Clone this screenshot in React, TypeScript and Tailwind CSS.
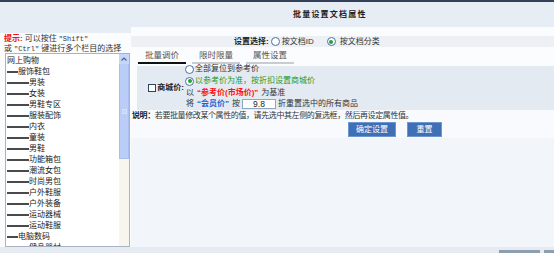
import React from "react";

const tree: [number, string][] = [
  [0, "网上购物"],
  [1, "服饰鞋包"],
  [2, "男装"],
  [2, "女装"],
  [2, "男鞋专区"],
  [2, "服装配饰"],
  [2, "内衣"],
  [2, "童装"],
  [2, "男鞋"],
  [2, "功能箱包"],
  [2, "潮流女包"],
  [2, "时尚男包"],
  [2, "户外鞋服"],
  [2, "户外装备"],
  [2, "运动器械"],
  [2, "运动鞋服"],
  [1, "电脑数码"],
  [2, "健身器材"],
];

function Radio({ checked }: { checked?: boolean }) {
  return (
    <span className="inline-flex h-[9px] w-[9px] shrink-0 items-center justify-center rounded-full border border-[#4d6f9e] bg-white">
      {checked && <span className="h-[4px] w-[4px] rounded-full bg-[#1fa533]" />}
    </span>
  );
}

export default function App() {
  return (
    <div className="flex h-[253px] w-[554px] flex-col overflow-hidden bg-[#f2f6fb] font-['Liberation_Sans','Noto_Sans_CJK_SC',sans-serif] text-[8px] text-[#333]">
      <div className="h-[2px] bg-[#34405a]" />

      <div className="flex h-[245px]">
        {/* left: category picker */}
        <div className="flex w-[131px] flex-col bg-[#fbfcfe]">
          <div className="h-[31px] bg-[#e7edf4]" />
          <div className="h-[20px] px-[4px] pt-[1px] leading-[10px] whitespace-nowrap">
            <div className="flex items-center">
              <span className="font-bold text-[#ee1111]">提示:</span>
              <span className="ml-[2px]">可以按住</span>
              <span className="ml-[2px] font-['Liberation_Mono',monospace] text-[7px]">"Shift"</span>
            </div>
            <div className="flex items-center">
              <span>或</span>
              <span className="mx-[2px] font-['Liberation_Mono',monospace] text-[7px]">"Ctrl"</span>
              <span>键进行多个栏目的选择</span>
            </div>
          </div>
          <div className="ml-[5px] flex w-[125px] flex-1 overflow-hidden border border-[#a9b4c2] bg-white">
            <div className="flex-1 overflow-hidden pl-[1px] pt-[1px] text-[#222]">
              {tree.map(([level, name], i) => (
                <div key={i} className="flex h-[11px] items-center whitespace-nowrap">
                  {level > 0 && (
                    <span
                      className={
                        level === 1
                          ? "inline-block h-[2px] w-[11px] bg-[#4a4a4a]"
                          : "inline-block h-[2px] w-[22px] bg-[#4a4a4a]"
                      }
                    />
                  )}
                  {name}
                </div>
              ))}
            </div>
            <div className="flex w-[10px] flex-col">
              <div className="flex h-[10px] items-center justify-center bg-[#c6d6fb]">
                <svg width="6" height="4" viewBox="0 0 6 4">
                  <path d="M0.5 3.5 L3 1 L5.5 3.5" fill="none" stroke="#4d6185" strokeWidth="1.2" />
                </svg>
              </div>
              <div className="flex h-[95px] items-center justify-center border-x border-b border-[#a9bdee] bg-[#bacdf7]">
                <span className="h-[5px] w-[5px] border border-[#d6e1fb] bg-[#c6d6fb]" />
              </div>
              <div className="flex-1 bg-[#f6f6ee]" />
            </div>
          </div>
        </div>

        {/* right: settings */}
        <div className="flex flex-1 flex-col">
          <div className="flex h-[25px] items-center bg-[#e7edf4] pl-[162px] font-bold tracking-[1.2px] text-[#222]">
            批量设置文档属性
          </div>
          <div className="h-[9px] bg-[#fbfcfe]" />
          <div className="flex h-[11px] items-center gap-[2px] bg-[#edf1f6] pl-[103px] whitespace-nowrap">
            <span className="font-bold text-[#222]">设置选择:</span>
            <Radio />
            <span className="mr-[11px]">按文档ID</span>
            <Radio checked />
            <span className="ml-[2px]">按文档分类</span>
          </div>
          <div className="flex h-[19px] gap-[6px] bg-[#fbfcfe] pl-[7px] pt-[1px]">
            {["批量调价", "限时限量", "属性设置"].map((t, i) => (
              <div key={t} className="flex w-[48px] flex-col items-center">
                <div className="flex h-[14px] items-center text-[8.5px] text-[#555]">{t}</div>
                <div className={i === 0 ? "h-[2px] w-full bg-[#111]" : "h-[2px] w-full bg-[#c9cdd2]"} />
              </div>
            ))}
          </div>

          <div className="flex bg-[#fbfcfe]">
            <div className="ml-[6px] flex h-[44px] flex-1 bg-[#e4eaf2]">
              <div className="flex w-[48px] items-center justify-end gap-[1px] pr-[1px]">
                <span className="h-[8px] w-[8px] border border-[#2a4466] bg-white" />
                <span className="font-bold text-[#222]">商城价:</span>
              </div>
              <div className="flex flex-col whitespace-nowrap">
                <div className="-mt-[3px] flex h-[12px] items-center gap-[1px]">
                  <Radio />
                  <span>全部复位到参考价</span>
                </div>
                <div className="flex h-[12px] items-center gap-[1px]">
                  <Radio checked />
                  <span className="text-[#1d9a2a]">以参考价为准，按折扣设置商城价</span>
                </div>
                <div className="flex h-[11px] items-center pl-[1px]">
                  以 <span className="mx-[3px] font-bold text-[#ff1010]">“参考价(市场价)”</span> 为基准
                </div>
                <div className="flex h-[12px] items-center pl-[1px]">
                  将 <span className="mx-[3px] font-bold text-[#1f5fd0]">“会员价”</span> 按
                  <span className="mx-[2px] flex h-[10px] w-[34px] items-center justify-center border border-[#8ea7c2] bg-white text-[8.5px] text-[#222]">
                    9.8
                  </span>
                  折重置选中的所有商品
                </div>
              </div>
            </div>
          </div>

          <div className="flex h-[12px] items-center bg-[#f8fafd] pl-[1px] tracking-[-0.4px] whitespace-nowrap">
            <span className="font-bold text-[#222]">说明：</span>
            若要批量修改某个属性的值，请先选中其左侧的复选框，然后再设定属性值。
          </div>
          <div className="flex h-[16px] gap-[11px] bg-[#f8fafd] pl-[217px]">
            <button className="h-[15px] w-[48px] border border-[#6f96cf] bg-[#3f6fb5] text-[8px] text-white">
              确定设置
            </button>
            <button className="h-[15px] w-[35px] border border-[#6f96cf] bg-[#3f6fb5] text-[8px] text-white">
              重置
            </button>
          </div>
          <div className="flex-1 bg-[#f2f6fb]" />
        </div>
      </div>

      <div className="flex h-[6px] items-end gap-[4px] bg-[#e5ebf1] pl-[499px]">
        <span className="h-[3px] w-[41px] shrink-0 bg-[#8d9eae]" />
        <span className="h-[3px] w-[30px] shrink-0 bg-[#8d9eae]" />
      </div>
    </div>
  );
}
